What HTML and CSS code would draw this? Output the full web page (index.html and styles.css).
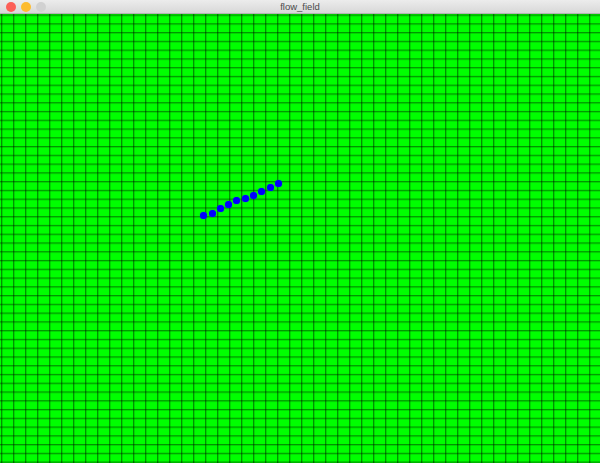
FILE: index.html
```html
<!DOCTYPE html>
<html>
<head>
<meta charset="utf-8">
<title>flow_field</title>
<link rel="stylesheet" href="styles.css">
</head>
<body>
<div class="window">
  <div class="titlebar">
    <div class="lights">
      <span class="light red"></span>
      <span class="light yellow"></span>
      <span class="light gray"></span>
    </div>
    <div class="title">flow_field</div>
  </div>
  <div class="canvas">
    <span class="dot" style="left:203px;top:201px"></span>
    <span class="dot" style="left:212px;top:199px"></span>
    <span class="dot" style="left:220px;top:194.7px"></span>
    <span class="dot" style="left:228.7px;top:190.7px"></span>
    <span class="dot" style="left:236.7px;top:186.3px"></span>
    <span class="dot" style="left:245px;top:184.3px"></span>
    <span class="dot" style="left:253.7px;top:181.3px"></span>
    <span class="dot" style="left:261.3px;top:177.3px"></span>
    <span class="dot" style="left:270.3px;top:173px"></span>
    <span class="dot" style="left:278px;top:169.3px"></span>
  </div>
</div>
</body>
</html>
```

FILE: styles.css
```css
* { box-sizing: border-box; }
html, body { margin: 0; padding: 0; }
body { width: 600px; height: 463px; overflow: hidden; background: #00ff00; font-family: "Liberation Sans", Arial, sans-serif; }
.window { width: 600px; height: 463px; display: flex; flex-direction: column; }
.titlebar {
  height: 14px;
  flex: none;
  position: relative;
  display: flex;
  align-items: center;
  background: linear-gradient(to bottom, #ececec, #d8d8d8);
  border-bottom: 1px solid #b4b4b4;
}
.lights { display: flex; gap: 5px; padding-left: 6px; align-items: center; }
.light { width: 10px; height: 10px; border-radius: 50%; display: block; }
.red { background: #fc5f57; }
.yellow { background: #fdbc2e; }
.gray { background: #d1d1d1; }
.title {
  position: absolute;
  left: 0; right: 0; top: 0;
  text-align: center;
  font-size: 9.5px;
  line-height: 13px;
  color: #4a4a4a;
}
.canvas {
  flex: 1;
  position: relative;
  background-color: #00ff00;
  background-image:
    linear-gradient(to right, rgba(0,0,0,0.42) 0, rgba(0,0,0,0.42) 1px, rgba(0,0,0,0.15) 1px, rgba(0,0,0,0.15) 2px, transparent 2px),
    linear-gradient(to bottom, rgba(0,0,0,0.42) 0, rgba(0,0,0,0.42) 1px, rgba(0,0,0,0.15) 1px, rgba(0,0,0,0.15) 2px, transparent 2px);
  background-size: 12px 8.78px;
  background-position: 1px 0.5px;
}
.dot {
  position: absolute;
  width: 7px;
  height: 7px;
  margin: -3.5px 0 0 -3.5px;
  border-radius: 50%;
  background: #0000ff;
  box-shadow: 0 0 1px #2020ff;
}
```
